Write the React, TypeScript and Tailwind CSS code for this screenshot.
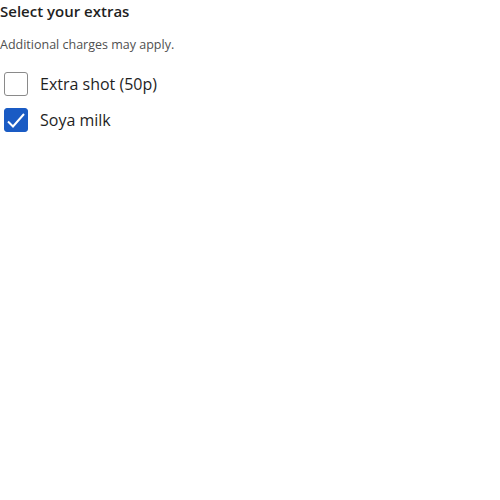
import { useState } from "react"

const Box = ({ checked, onClick }: { checked: boolean; onClick: () => void }) => (
    <button
        onClick={onClick}
        className={`w-6 h-6 rounded-[3px] flex items-center justify-center shrink-0 ${checked ? "bg-[#1a5bc4] border border-[#1a5bc4]" : "bg-white border border-[#8a8a8a]"}`}
    >
        {checked && (
            <svg width="22" height="22" viewBox="0 0 22 22" fill="none">
                <path d="M3 12.5l5 5L19 5" stroke="white" strokeWidth="2" />
            </svg>
        )}
    </button>
)

export default function App() {
    const [extras, setExtras] = useState({ shot: false, soya: true })

    return (
        <div className="font-['Open_Sans',sans-serif] text-[#1f1f1f]">
            <h2 className="text-[15px] font-semibold leading-[22px]">Select your extras</h2>
            <p className="text-[12.5px] text-[#505050] mt-[15px] leading-4">Additional charges may apply.</p>
            <div className="flex flex-col gap-3 mt-[19px] pl-1">
                <label className="flex items-center gap-3 text-[16px]">
                    <Box checked={extras.shot} onClick={() => setExtras({ ...extras, shot: !extras.shot })} />
                    Extra shot (50p)
                </label>
                <label className="flex items-center gap-3 text-[16px]">
                    <Box checked={extras.soya} onClick={() => setExtras({ ...extras, soya: !extras.soya })} />
                    Soya milk
                </label>
            </div>
        </div>
    )
}
